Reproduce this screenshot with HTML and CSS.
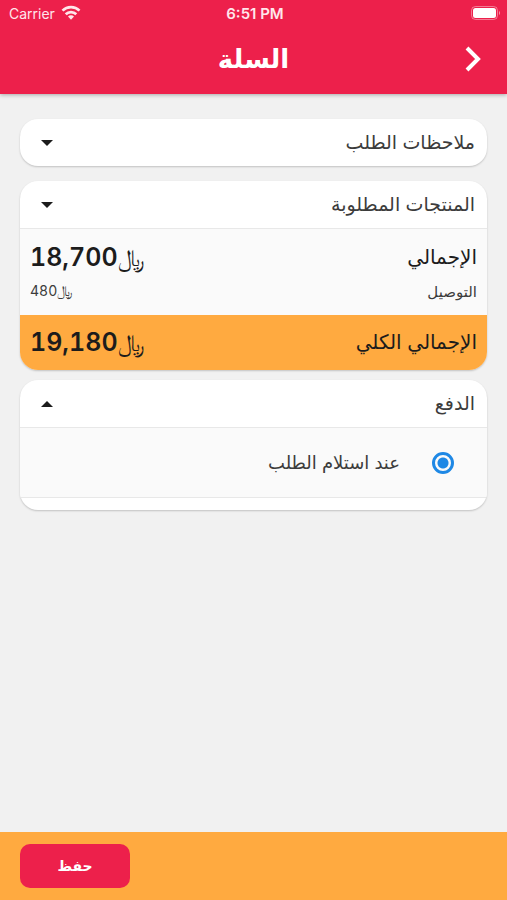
FILE: index.html
```html
<!DOCTYPE html>
<html lang="ar" dir="rtl">
<head>
    <meta charset="UTF-8">
    <meta name="viewport" content="width=device-width, initial-scale=1.0">
    <title>السلة</title>
    <link rel="stylesheet" href="styles.css">
</head>
<body>
    <header class="top">
        <div class="status-bar" dir="ltr">
            <div class="carrier">
                <span>Carrier</span>
                <svg width="20" height="16" viewBox="0 0 20 16" fill="none" stroke="currentColor" stroke-width="2.7">
                    <path d="M1.5 5.6a12.2 12.2 0 0 1 17 0"/>
                    <path d="M4.7 9.2a7.6 7.6 0 0 1 10.6 0"/>
                    <path d="M10 14.8l-3-3.2a4.1 4.1 0 0 1 6 0z" fill="currentColor" stroke="none"/>
                </svg>
            </div>
            <span class="time">6:51 PM</span>
            <svg class="battery" width="30" height="14" viewBox="0 0 30 14">
                <rect x="0.5" y="0.5" width="26" height="13" rx="4" fill="none" stroke="currentColor" stroke-opacity="0.4"/>
                <rect x="2" y="2" width="23" height="10" rx="2.5" fill="currentColor"/>
                <path d="M28 5v4a2.4 2.4 0 0 0 0-4z" fill="currentColor" fill-opacity="0.5"/>
            </svg>
        </div>
        <div class="app-bar">
            <button type="button" class="back" aria-label="رجوع">
                <svg width="16" height="26" viewBox="0 0 16 26" fill="none" stroke="currentColor" stroke-width="4">
                    <path d="M2 2l11 11L2 24"/>
                </svg>
            </button>
            <h1>السلة</h1>
        </div>
    </header>

    <main class="content">
        <section class="card">
            <button type="button" class="card-head" aria-expanded="false">
                <span>ملاحظات الطلب</span>
                <span class="arrow"></span>
            </button>
        </section>

        <section class="card order">
            <button type="button" class="card-head" aria-expanded="false">
                <span>المنتجات المطلوبة</span>
                <span class="arrow"></span>
            </button>
            <div class="totals">
                <div class="row">
                    <span>الإجمالي</span>
                    <span class="price" dir="ltr">18,700<span class="rial">&#xFDFC;</span></span>
                </div>
                <div class="row delivery">
                    <span>التوصيل</span>
                    <span class="price" dir="ltr">480<span class="rial">&#xFDFC;</span></span>
                </div>
            </div>
            <div class="row grand-total">
                <span>الإجمالي الكلي</span>
                <span class="price" dir="ltr">19,180<span class="rial">&#xFDFC;</span></span>
            </div>
        </section>

        <section class="card payment">
            <button type="button" class="card-head" aria-expanded="true">
                <span>الدفع</span>
                <span class="arrow up"></span>
            </button>
            <label class="option">
                <input type="radio" name="payment" checked>
                <span>عند استلام الطلب</span>
            </label>
        </section>
    </main>

    <footer class="bottom">
        <button type="button" class="save">حفظ</button>
    </footer>
</body>
</html>
```
FILE: styles.css
```css
:root {
    --primary: #ed204b;
    --orange: #ffaa40;
    --page: #f1f1f1;
    --text: #3c3c3c;
    --dark: #1c1c1c;
}

* {
    box-sizing: border-box;
    margin: 0;
    padding: 0;
}

body {
    display: flex;
    flex-direction: column;
    min-height: 100vh;
    background: var(--page);
    color: var(--text);
    font-family: Inter, "DejaVu Sans", sans-serif;
    font-size: 18px;
}

button {
    border: none;
    background: none;
    color: inherit;
    font: inherit;
    cursor: pointer;
}

.top {
    background: var(--primary);
    color: #fff;
    box-shadow: 0 1px 4px rgba(0, 0, 0, 0.3);
}

.status-bar {
    display: grid;
    grid-template-columns: 1fr auto 1fr;
    align-items: center;
    height: 26px;
    padding: 0 6px 0 9px;
    font-size: 14px;
    color: #ffe6eb;
}

.carrier {
    display: flex;
    align-items: center;
    gap: 6px;
}

.time {
    font-size: 15px;
    font-weight: 600;
}

.battery {
    justify-self: end;
    color: #fff;
}

.app-bar {
    display: grid;
    grid-template-columns: 1fr auto 1fr;
    align-items: center;
    height: 68px;
    padding: 0 26px 2px;
}

.app-bar h1 {
    font-size: 26px;
    line-height: 32px;
}

.back {
    justify-self: start;
    display: flex;
}

.content {
    flex: 1;
    padding: 25px 20px;
}

.card {
    overflow: hidden;
    margin-bottom: 15px;
    border-radius: 18px;
    background: #fff;
    box-shadow: 0 1px 2px rgba(0, 0, 0, 0.2);
}

.card-head {
    display: flex;
    justify-content: space-between;
    align-items: center;
    width: 100%;
    height: 47px;
    padding: 0 12px 0 21px;
    font-size: 19px;
}

.arrow {
    border: 6px solid transparent;
    border-top-color: var(--dark);
    border-bottom: none;
}

.arrow.up {
    border-top: none;
    border-bottom: 6px solid var(--dark);
}

.order {
    margin-bottom: 10px;
}

.totals {
    padding: 8px 0 10px;
    border-top: 1px solid #e8e8e8;
    background: #fafafa;
}

.row {
    display: flex;
    justify-content: space-between;
    align-items: center;
    height: 40px;
    padding: 0 10px;
    color: var(--dark);
    font-size: 20px;
}

.price {
    font-size: 25px;
    font-weight: 600;
    font-variant-numeric: tabular-nums;
}

.rial {
    font-size: 24px;
    font-weight: 400;
}

.delivery {
    height: 28px;
    font-size: 15px;
    color: var(--text);
}

.delivery .price,
.delivery .rial {
    font-size: 14px;
    font-weight: 400;
}

.grand-total {
    height: 55px;
    padding-bottom: 2px;
    background: var(--orange);
}

.payment {
    padding-bottom: 12px;
}

.option {
    display: flex;
    align-items: center;
    gap: 32px;
    height: 71px;
    padding: 0 33px;
    border: solid #e8e8e8;
    border-width: 1px 0;
    background: #fafafa;
    font-size: 18px;
}

.option input {
    appearance: none;
    width: 22px;
    height: 22px;
    border: 3px solid #1e88e5;
    border-radius: 50%;
    background: radial-gradient(circle, #1e88e5 5px, transparent 6px);
}

.bottom {
    display: flex;
    justify-content: flex-end;
    padding: 12px 20px;
    background: var(--orange);
}

.save {
    width: 110px;
    height: 44px;
    padding-bottom: 2px;
    border-radius: 10px;
    background: var(--primary);
    color: #fff;
    font-size: 14px;
    font-weight: 700;
}
```
